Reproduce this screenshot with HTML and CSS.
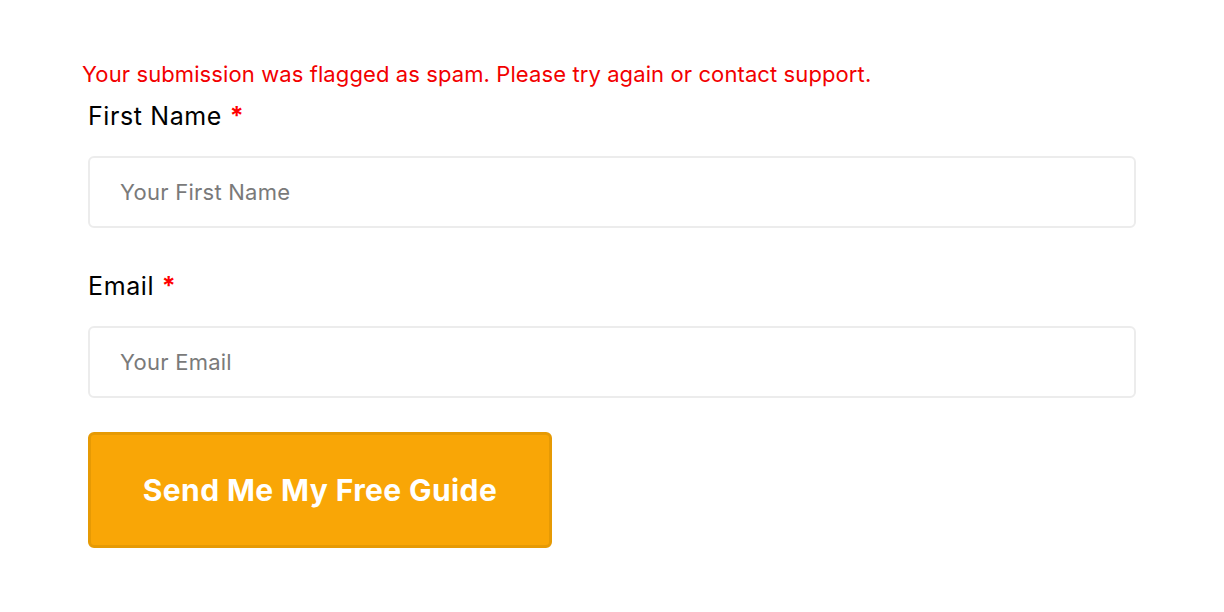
FILE: index.html
```html
<!DOCTYPE html>
<html>
<head>
  <title>Free Guide</title>
  <link rel="stylesheet" href="styles.css">
</head>
<body>
  <div class="container">
    <p class="form-error">Your submission was flagged as spam. Please try again or contact support.</p>

    <form class="guide-form">
      <div class="field">
        <label for="first-name">First Name <span class="required">*</span></label>
        <input type="text" id="first-name" placeholder="Your First Name">
      </div>

      <div class="field">
        <label for="email">Email <span class="required">*</span></label>
        <input type="email" id="email" placeholder="Your Email">
      </div>

      <button type="submit" class="submit-button">Send Me My Free Guide</button>
    </form>
  </div>
</body>
</html>
```

FILE: styles.css
```css
/* Main Styles */
body {
  font-family: Inter, "Noto Sans", sans-serif;
  margin: 0;
  padding: 0;
  background-color: #fff;
}

.container {
  padding: 59px 88px 0 82px;
}

.form-error {
  margin: 0;
  color: #f20000;
  font-size: 22px;
  line-height: 30px;
  letter-spacing: 0.1px;
}

/* Form Styles */
.guide-form {
  margin-left: 6px;
  padding-top: 12px;
}

.field {
  margin-bottom: 43px;
}

.field:last-of-type {
  margin-bottom: 34px;
}

label {
  display: block;
  font-size: 25px;
  line-height: 30px;
  letter-spacing: 0.6px;
  color: #000;
  margin-bottom: 25px;
}

.required {
  color: #f00;
  font-weight: bold;
}

input {
  display: block;
  box-sizing: border-box;
  width: 100%;
  height: 72px;
  padding: 0 30px;
  border: 2px solid #ececec;
  border-radius: 6px;
  font-family: inherit;
  font-size: 22px;
  letter-spacing: 0.25px;
  color: #333;
}

input::placeholder {
  color: #7a7a7a;
}

/* Button Styles */
.submit-button {
  box-sizing: border-box;
  width: 464px;
  height: 116px;
  background-color: #f9a606;
  border: 3px solid #e69a04;
  border-radius: 6px;
  color: #fff;
  font-family: inherit;
  font-size: 30px;
  font-weight: bold;
  letter-spacing: 0.4px;
  cursor: pointer;
}
```
